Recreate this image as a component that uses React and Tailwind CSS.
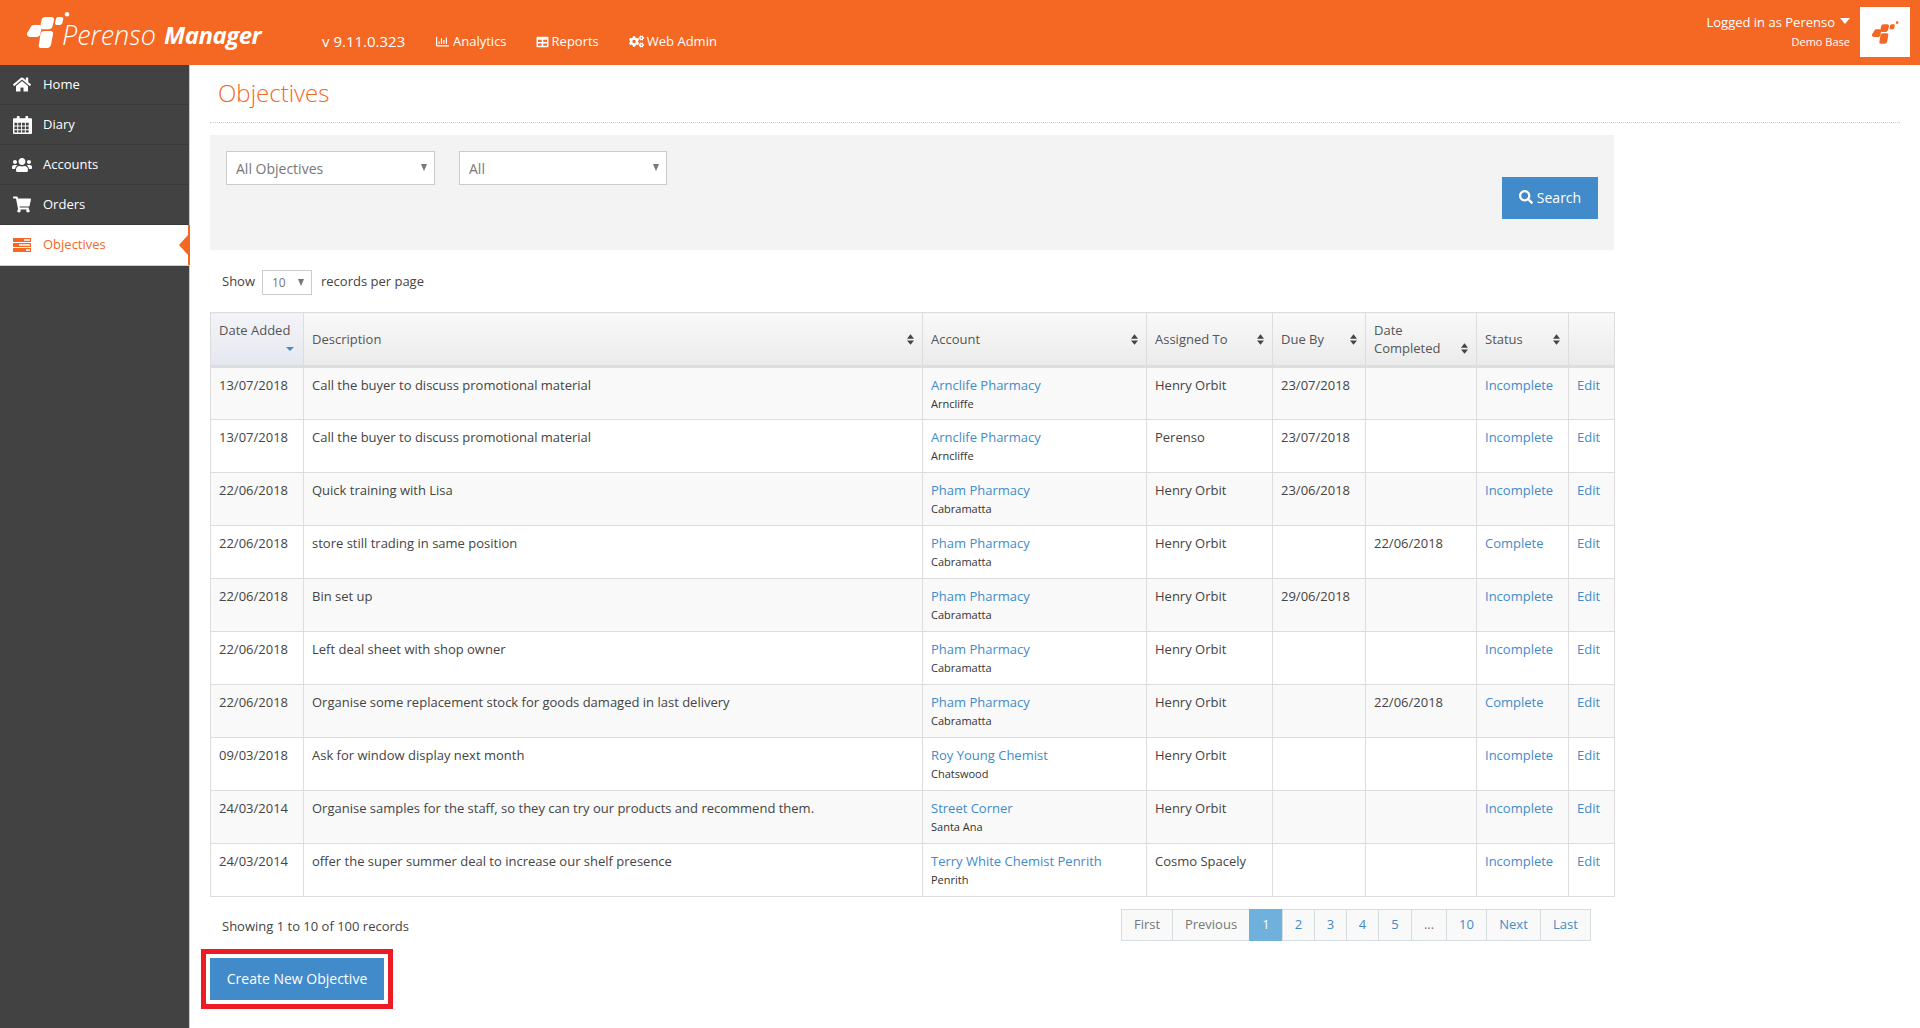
import { FaHome, FaUsers, FaShoppingCart, FaRegChartBar, FaTable, FaCogs, FaSearch } from 'react-icons/fa'

const navItems = [
  { label: 'Home', icon: <FaHome className="w-[18px] h-[17px]" /> },
  { label: 'Diary', icon: <CalendarIcon /> },
  { label: 'Accounts', icon: <FaUsers className="w-[20px] h-[18px]" /> },
  { label: 'Orders', icon: <FaShoppingCart className="w-[18px] h-[17px]" /> },
]

const objectives = [
  ['13/07/2018', 'Call the buyer to discuss promotional material', 'Arnclife Pharmacy', 'Arncliffe', 'Henry Orbit', '23/07/2018', '', 'Incomplete'],
  ['13/07/2018', 'Call the buyer to discuss promotional material', 'Arnclife Pharmacy', 'Arncliffe', 'Perenso', '23/07/2018', '', 'Incomplete'],
  ['22/06/2018', 'Quick training with Lisa', 'Pham Pharmacy', 'Cabramatta', 'Henry Orbit', '23/06/2018', '', 'Incomplete'],
  ['22/06/2018', 'store still trading in same position', 'Pham Pharmacy', 'Cabramatta', 'Henry Orbit', '', '22/06/2018', 'Complete'],
  ['22/06/2018', 'Bin set up', 'Pham Pharmacy', 'Cabramatta', 'Henry Orbit', '29/06/2018', '', 'Incomplete'],
  ['22/06/2018', 'Left deal sheet with shop owner', 'Pham Pharmacy', 'Cabramatta', 'Henry Orbit', '', '', 'Incomplete'],
  ['22/06/2018', 'Organise some replacement stock for goods damaged in last delivery', 'Pham Pharmacy', 'Cabramatta', 'Henry Orbit', '', '22/06/2018', 'Complete'],
  ['09/03/2018', 'Ask for window display next month', 'Roy Young Chemist', 'Chatswood', 'Henry Orbit', '', '', 'Incomplete'],
  ['24/03/2014', 'Organise samples for the staff, so they can try our products and recommend them.', 'Street Corner', 'Santa Ana', 'Henry Orbit', '', '', 'Incomplete'],
  ['24/03/2014', 'offer the super summer deal to increase our shelf presence', 'Terry White Chemist Penrith', 'Penrith', 'Cosmo Spacely', '', '', 'Incomplete'],
]

const pages = [
  { label: 'First', width: 'w-[52px]', muted: true },
  { label: 'Previous', width: 'w-[78px]', muted: true },
  { label: '1', width: 'w-[34px]', active: true },
  { label: '2', width: 'w-[33px]' },
  { label: '3', width: 'w-[33px]' },
  { label: '4', width: 'w-[33px]' },
  { label: '5', width: 'w-[34px]' },
  { label: '...', width: 'w-[36px]', muted: true },
  { label: '10', width: 'w-[41px]' },
  { label: 'Next', width: 'w-[55px]' },
  { label: 'Last', width: 'w-[51px]' },
]

function CalendarIcon() {
  return (
    <svg viewBox="0 0 20 20" className="w-[19px] h-[20px]" fill="currentColor">
      <path fillRule="evenodd" d="M1 3h3V1.500a1 1 0 0 1 1-1h1a1 1 0 0 1 1 1V3h6V1.500a1 1 0 0 1 1-1h1a1 1 0 0 1 1 1V3h3a1 1 0 0 1 1 1v14.500a1 1 0 0 1-1 1H1a1 1 0 0 1-1-1V4a1 1 0 0 1 1-1zm.5 4.500v3h3v-3zm4 0v3h3v-3zm4 0v3h3v-3zm4 0v3h3v-3zm-12 4v3h3v-3zm4 0v3h3v-3zm4 0v3h3v-3zm4 0v3h3v-3zm-12 4v2.500h3V15.500zm4 0v2.500h3V15.500zm4 0v2.500h3V15.500zm4 0v2.500h3V15.500z" />
    </svg>
  )
}

function TasksIcon() {
  return (
    <svg viewBox="0 0 18 14" className="w-[18px] h-[14px]" fill="currentColor">
      <path fillRule="evenodd" d="M0 0h18v4H0zM11 1.200v1.600h6V1.200zM0 5h18v4H0zM6 6.200v1.600h11V6.200zM0 10h18v4H0zM13 11.200v1.600h4v-1.600z" />
    </svg>
  )
}

function Logo({ className }) {
  return (
    <svg viewBox="0 0 43 36" className={className} fill="currentColor">
      <path d="M3.500 15.500C4 14 5.200 13 6.800 13h5.700c1.700 0 2.700 1.300 2.200 3l-1.500 6.200c-.5 1.800-1.800 2.800-3.500 2.800H3c-2.300 0-3.600-1.700-3-3.800z" />
      <path d="M14.500 8c.5-1.700 1.900-3 3.700-3h6.300c1.900 0 3 1.400 2.500 3.200l-1.500 6c-.5 1.800-1.900 3-3.700 3h-6c-1.900 0-3-1.400-2.500-3.200z" />
      <path d="M13.500 22c.5-1.800 1.900-3 3.700-3h6.300c1.900 0 3 1.400 2.500 3.200l-2 10.600c-.5 1.800-1.900 3.200-3.700 3.200h-6c-1.900 0-3-1.400-2.500-3.200z" />
      <path d="M29 6.500c.4-1 1.300-1.500 2.300-1.500h3.200c1.300 0 2 1 1.700 2.200l-.8 3.600c-.3 1.300-1.300 2.200-2.600 2.200h-3c-1.300 0-2-1-1.700-2.200z" />
      <circle cx="40" cy="2.200" r="2.200" />
    </svg>
  )
}

function SortIcon() {
  return (
    <svg viewBox="0 0 8 12" className="w-[7px] h-[11px] shrink-0 mb-[3px] text-[#444]" fill="currentColor">
      <path d="M4 0l4 5H0zM0 7h8l-4 5z" />
    </svg>
  )
}

function SelectBox({ value, className, caretClass }) {
  return (
    <div className={`relative ${className}`}>
      <select defaultValue={value} className="appearance-none w-full h-full bg-white border border-[#ccc] pl-[9px] text-[#777] outline-none">
        <option>{value}</option>
      </select>
      <span className={`absolute right-[8px] ${caretClass} pointer-events-none w-0 h-0 border-x-[3px] border-t-[7px] border-x-transparent border-t-[#777]`} />
    </div>
  )
}

function HeaderCell({ label }) {
  return (
    <th className="border border-[#ddd] border-b-[3px] bg-gradient-to-b from-[#f9f9f9] to-[#ebebeb] px-2 py-0 align-middle font-medium text-left leading-[18px] text-[#555]">
      <div className="flex items-end justify-between">
        <span>{label}</span>
        <SortIcon />
      </div>
    </th>
  )
}

function ObjectiveRow({ row, striped }) {
  const [added, description, account, suburb, assignee, due, completed, status] = row
  const cell = 'border border-[#ddd] px-2 pt-[7px] pb-0 align-top leading-[20px]'
  return (
    <tr className={`h-[53px] ${striped ? 'bg-[#f9f9f9]' : 'bg-white'}`}>
      <td className={cell}>{added}</td>
      <td className={cell}>{description}</td>
      <td className={cell}>
        <div className="text-[#428bca]">{account}</div>
        <div className="text-[11px] leading-[18px] text-[#333]">{suburb}</div>
      </td>
      <td className={cell}>{assignee}</td>
      <td className={cell}>{due}</td>
      <td className={cell}>{completed}</td>
      <td className={`${cell} text-[#428bca]`}>{status}</td>
      <td className={`${cell} text-[#428bca]`}>Edit</td>
    </tr>
  )
}

export default function App() {
  return (
    <div className="h-screen flex flex-col overflow-hidden bg-white font-['Open_Sans',sans-serif] text-[13px] text-[#444]">
      {/* Top bar */}
      <header className="h-[65px] shrink-0 flex bg-[#f46824] text-white">
        <div className="w-[322px] shrink-0 flex items-start pl-[27px] pt-[12px]">
          <Logo className="w-[43px] h-[36px]" />
          <span className="ml-[-8px] mt-[5px] italic font-light text-[27px] leading-[36px]">Perenso</span>
          <span className="ml-[8px] mt-[6px] italic font-bold text-[24px] leading-[34px] tracking-[-0.5px]">Manager</span>
        </div>
        <nav className="flex items-center gap-[30px] pt-[18px]">
          <span className="w-[83px] text-[15px] whitespace-nowrap">v 9.11.0.323</span>
          <span className="flex items-center gap-[3px]"><FaRegChartBar className="w-[15px] h-[13px]" />Analytics</span>
          <span className="flex items-center gap-[3px] -ml-px"><FaTable className="w-[13px] h-[12px]" />Reports</span>
          <span className="flex items-center gap-[3px]"><FaCogs className="w-[15px] h-[13px]" />Web Admin</span>
        </nav>
        <div className="ml-auto flex items-start">
          <div className="flex flex-col items-end pt-[13px]">
            <div className="flex items-center gap-[5px] leading-[18px]">
              Logged in as Perenso
              <span className="w-0 h-0 border-x-[5px] border-t-[6px] border-x-transparent border-t-white mb-[3px]" />
            </div>
            <div className="text-[11px] leading-[18px] mt-[2px]">Demo Base</div>
          </div>
          <div className="ml-[10px] mr-[10px] mt-[7px] w-[50px] h-[50px] bg-white flex items-center justify-center text-[#f46824]">
            <Logo className="w-[27px] h-[23px]" />
          </div>
        </div>
      </header>

      <div className="flex-1 flex min-h-0">
        {/* Side menu */}
        <aside className="w-[190px] shrink-0 bg-[#424242] border-r border-[#ccc] text-white">
          {navItems.map((item) => (
            <div key={item.label} className="h-[40px] flex items-center border-b border-[#383838]">
              <span className="w-[43px] flex justify-center pl-[1px]">{item.icon}</span>
              {item.label}
            </div>
          ))}
          <div className="relative h-[41px] -mr-px flex items-center bg-white border-b border-[#ccc] text-[#f46824] font-medium">
            <span className="w-[43px] flex justify-center pl-[1px]"><TasksIcon /></span>
            Objectives
            <span className="absolute right-0 top-0 bottom-0 w-[2px] bg-[#f46824]" />
            <span className="absolute right-[2px] top-[10px] w-0 h-0 border-y-[10px] border-r-[9px] border-y-transparent border-r-[#f46824]" />
          </div>
        </aside>

        {/* Page content */}
        <main className="flex-1 min-w-0 pl-[20px] pr-[20px]">
          <div className="h-[58px] pl-[8px] border-b border-dotted border-[#ccc] flex items-center">
            <h1 className="font-light text-[24px] text-[#f46824] leading-[33px] pb-[2px]">Objectives</h1>
          </div>

          {/* Filters */}
          <div className="mt-[12px] w-[1404px] h-[115px] bg-[#f3f3f3] flex items-start gap-[24px] pl-[16px] pr-[16px] pt-[16px] text-[14px]">
            <SelectBox value="All Objectives" className="w-[209px] h-[34px]" caretClass="top-[13px]" />
            <SelectBox value="All" className="w-[208px] h-[34px]" caretClass="top-[13px]" />
            <button className="ml-auto mt-[26px] w-[96px] h-[42px] pb-[2px] bg-[#428bca] text-white flex items-center justify-center gap-[4px]">
              <FaSearch className="w-[14px] h-[14px]" />Search
            </button>
          </div>

          <div className="mt-[20px] h-[25px] flex items-center pl-[12px]">
            <span className="pb-[1px]">Show</span>
            <SelectBox value="10" className="ml-[7px] w-[50px] h-[25px] text-[12px]" caretClass="top-[9px]" />
            <span className="ml-[9px] pb-[1px]">records per page</span>
          </div>

          {/* Objectives table */}
          <table className="mt-[17px] w-[1404px] table-fixed border-collapse">
            <colgroup>
              <col className="w-[93px]" />
              <col className="w-[619px]" />
              <col className="w-[224px]" />
              <col className="w-[126px]" />
              <col className="w-[93px]" />
              <col className="w-[111px]" />
              <col className="w-[92px]" />
              <col className="w-[46px]" />
            </colgroup>
            <thead>
              <tr className="h-[54px]">
                <th className="border border-[#ddd] border-b-[3px] bg-gradient-to-b from-[#f3f4f8] to-[#e5e8ef] px-2 pt-[8px] pb-0 align-top font-medium text-left leading-[18px] text-[#555]">
                  <div>Date Added</div>
                  <div className="flex justify-end pr-[1px] h-[20px] items-center">
                    <span className="w-0 h-0 border-x-[4px] border-t-[4px] border-x-transparent border-t-[#428bca]" />
                  </div>
                </th>
                <HeaderCell label="Description" />
                <HeaderCell label="Account" />
                <HeaderCell label="Assigned To" />
                <HeaderCell label="Due By" />
                <HeaderCell label={<>Date<br />Completed</>} />
                <HeaderCell label="Status" />
                <th className="border border-[#ddd] border-b-[3px] bg-gradient-to-b from-[#f9f9f9] to-[#ebebeb]" />
              </tr>
            </thead>
            <tbody>
              {objectives.map((row, i) => (
                <ObjectiveRow key={i} row={row} striped={i % 2 === 0} />
              ))}
            </tbody>
          </table>

          {/* Table footer */}
          <div className="mt-[12px] w-[1381px] flex items-center justify-between pl-[12px]">
            <span className="pt-[4px]">Showing 1 to 10 of 100 records</span>
            <div className="flex h-[32px]">
              {pages.map((page) => (
                <span
                  key={page.label}
                  className={`${page.width} -ml-px first:ml-0 flex items-center justify-center border ${page.active ? 'bg-[#6fb0dc] border-[#6fb0dc] text-white' : 'bg-[#f9f9f9] border-[#d5dde0]'} ${page.muted ? 'text-[#777]' : ''} ${!page.active && !page.muted ? 'text-[#428bca]' : ''}`}
                >
                  {page.label}
                </span>
              ))}
            </div>
          </div>

          <div className="mt-[8px] -ml-[9px] w-fit border-[5px] border-[#ed1c24] p-[4px]">
            <button className="w-[174px] h-[42px] pb-[2px] bg-[#428bca] text-white text-[14px]">Create New Objective</button>
          </div>
        </main>
      </div>
    </div>
  )
}
